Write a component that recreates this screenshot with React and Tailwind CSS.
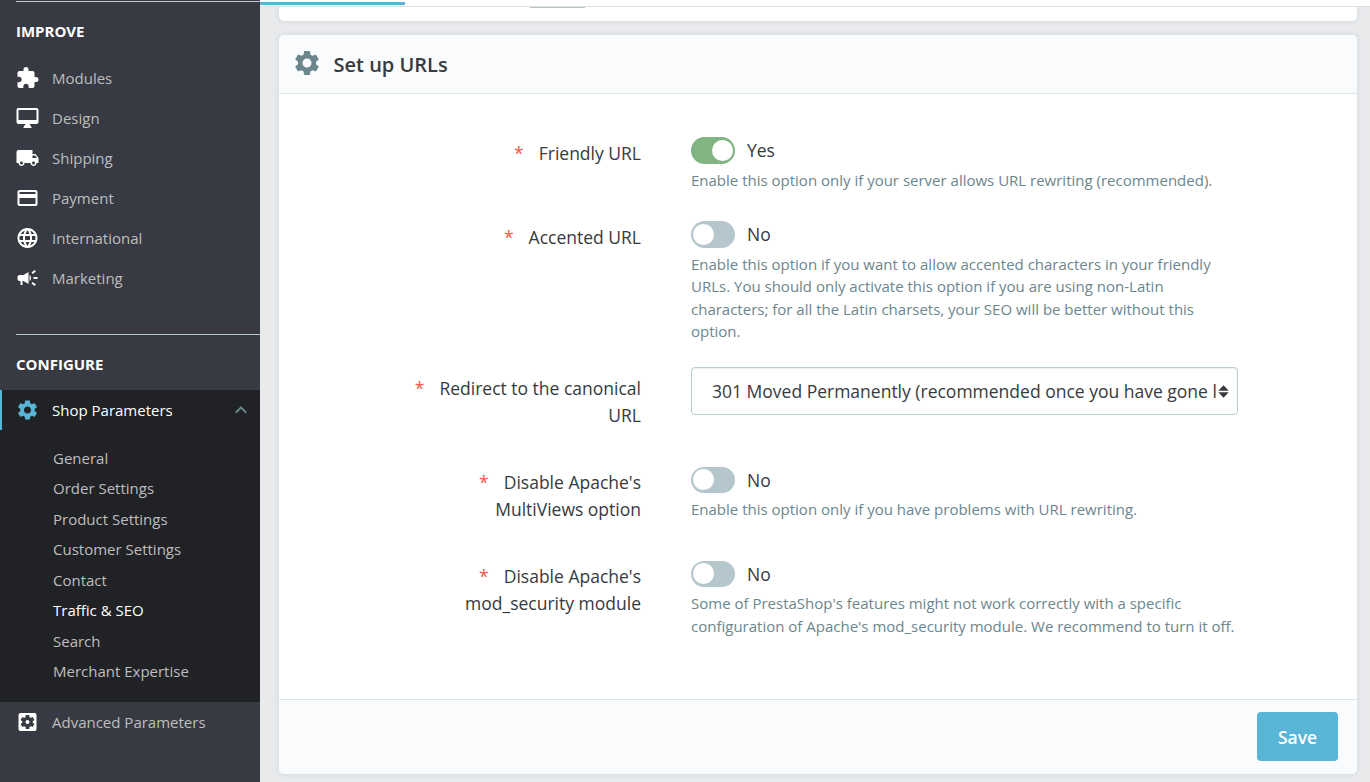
import React from "react";
import {
  MdExtension, MdLocalShipping, MdCreditCard, MdLanguage,
  MdCampaign, MdSettings, MdSettingsApplications, MdKeyboardArrowUp,
} from "react-icons/md";

function DesktopIcon({ className }) {
  return (
    <svg className={className} viewBox="0 0 24 24" fill="currentColor">
      <path d="M21 2H3c-1.1 0-2 .9-2 2v12c0 1.1.9 2 2 2h7l-2 3v1h8v-1l-2-3h7c1.1 0 2-.9 2-2V4c0-1.1-.9-2-2-2zm0 12H3V4h18v10z" />
    </svg>
  );
}

const improve = [
  ["Modules", MdExtension],
  ["Design", DesktopIcon],
  ["Shipping", MdLocalShipping],
  ["Payment", MdCreditCard],
  ["International", MdLanguage],
  ["Marketing", MdCampaign],
];

const shopLinks = [
  "General", "Order Settings", "Product Settings", "Customer Settings",
  "Contact", "Traffic & SEO", "Search", "Merchant Expertise",
];

function Sidebar() {
  return (
    <nav className="flex h-full w-[260px] shrink-0 flex-col bg-[#373a42] text-[15px] text-[#bebebe]">
      <div className="mt-px ml-4 h-px shrink-0 bg-[#bbcdd2]" />
      <h2 className="mt-[19px] ml-4 text-[15px] leading-5 font-bold text-white">IMPROVE</h2>
      <ul className="mt-[17px]">
        {improve.map(([name, Icon]) => (
          <li key={name} className="flex h-10 items-center pl-4">
            <Icon className="size-6 -translate-x-[0.5px] text-white" />
            <span className="ml-3">{name}</span>
          </li>
        ))}
      </ul>
      <div className="mt-9 ml-4 h-px shrink-0 bg-[#b3c7cd]" />
      <h2 className="mt-[19px] ml-4 text-[15px] leading-5 font-bold text-white">CONFIGURE</h2>
      <div className="mt-4 h-[312px] shrink-0 bg-[#212226]">
        <div className="flex h-10 items-center border-l-2 border-[#58b5d6] pl-3.5 text-white">
          <MdSettings className="size-6 -translate-x-[0.5px] text-[#58b5d6]" />
          <span className="ml-3">Shop Parameters</span>
          <MdKeyboardArrowUp className="mr-[7px] ml-auto size-6 text-[#6c868e]" />
        </div>
        <ul className="pt-[13px] pl-[53px]">
          {shopLinks.map((name) => (
            <li key={name} className={`h-[30.45px] leading-[30px] ${name === "Traffic & SEO" ? "text-white" : ""}`}>
              {name}
            </li>
          ))}
        </ul>
      </div>
      <div className="flex h-10 items-center pl-4">
        <MdSettingsApplications className="size-6 -translate-x-[0.5px] text-white" />
        <span className="ml-3">Advanced Parameters</span>
      </div>
    </nav>
  );
}

function Switch({ on, short }) {
  return (
    <div className="flex h-[27px] items-center gap-3 text-[17.5px]">
      <div className={`flex w-11 items-center rounded-full px-0.5 ${short ? "h-[26px]" : "h-[27px]"} ${on ? "justify-end bg-[#80b482]" : "justify-start bg-[#b5c6cd]"}`}>
        <div className="size-[21px] rounded-full bg-white" />
      </div>
      <span>{on ? "Yes" : "No"}</span>
    </div>
  );
}

function Row({ lines, help, height, children }) {
  return (
    <div className={`flex ${height}`}>
      <div className="mt-[3px] w-[362px] shrink-0 text-right text-[17.5px] leading-[27px]">
        {lines.map((line, i) => (
          <div key={line}>
            {i === 0 && <span className="mr-[15px] text-[#ee5a48]">*</span>}
            {line}
          </div>
        ))}
      </div>
      <div className="ml-[50px] w-[560px]">
        {children}
        {help && (
          <div className="mt-[5px] text-[15px] leading-[22.4px] text-[#6c868e]">
            {help.map((line) => (
              <div key={line} className="whitespace-nowrap">{line}</div>
            ))}
          </div>
        )}
      </div>
    </div>
  );
}

export default function App() {
  return (
    <div className="flex h-[782px] w-[1370px] overflow-hidden bg-[#e9eaec] font-['Open_Sans','Noto_Sans',sans-serif] text-[#363a41]">
      <Sidebar />
      <main className="flex min-w-0 flex-1 flex-col">
        <div className="h-[7px] shrink-0 border-b border-[#dddfe1] bg-white pt-0.5">
          <div className="h-[3px] w-[145px] bg-[#58b5d6]" />
        </div>
        <div className="mr-[13px] ml-[19px] h-3.5 shrink-0 rounded-b-[5px] bg-white pl-[251px] shadow-[0_0_4px_1px_rgba(172,195,200,0.35)] [clip-path:inset(0_-8px_-8px_-8px)]">
          <div className="h-px w-[55px] bg-[#b9c4c9]" />
        </div>
        <section className="mt-3.5 mr-[13px] ml-[19px] flex h-[739px] shrink-0 flex-col overflow-hidden rounded-[5px] bg-white shadow-[0_0_4px_1px_rgba(172,195,200,0.35)]">
          <header className="flex h-[59px] items-center border-b border-[#dce6e8] bg-[#fafbfc] pl-[13px]">
            <MdSettings className="mb-0.5 size-[30px] text-[#6c868e]" />
            <h1 className="mt-0.5 ml-[11.5px] text-[20px] font-semibold">Set up URLs</h1>
          </header>
          <div className="flex-1 pt-[43px]">
            <Row lines={["Friendly URL"]} height="h-[84px]" help={["Enable this option only if your server allows URL rewriting (recommended)."]}>
              <Switch on />
            </Row>
            <Row
              lines={["Accented URL"]}
              height="h-[151px]"
              help={[
                "Enable this option if you want to allow accented characters in your friendly",
                "URLs. You should only activate this option if you are using non-Latin",
                "characters; for all the Latin charsets, your SEO will be better without this",
                "option.",
              ]}
            >
              <Switch />
            </Row>
            <Row lines={["Redirect to the canonical", "URL"]} height="h-[94.4px]">
              <div className="-mt-[5px] flex h-12 w-[547px] items-center rounded-[4px] border border-[#bbcdd2] pl-5 text-[17.5px] shadow-[inset_0_1px_2px_rgba(0,0,0,0.07)]">
                <span className="w-[506px] overflow-hidden whitespace-nowrap">301 Moved Permanently (recommended once you have gone live)</span>
                <svg className="h-[13px] w-[11px]" viewBox="0 0 11 13" fill="#363a41">
                  <path d="M0.3 5.7 5.5 0.2l5.2 5.5zM0.3 7.3h10.4l-5.2 5.5z" />
                </svg>
              </div>
            </Row>
            <Row lines={["Disable Apache's", "MultiViews option"]} height="h-[94px]" help={["Enable this option only if you have problems with URL rewriting."]}>
              <Switch short />
            </Row>
            <Row
              lines={["Disable Apache's", "mod_security module"]}
              height="h-[94px]"
              help={[
                "Some of PrestaShop's features might not work correctly with a specific",
                "configuration of Apache's mod_security module. We recommend to turn it off.",
              ]}
            >
              <Switch short />
            </Row>
          </div>
          <footer className="flex h-[75px] justify-end border-t border-[#dce6e8] bg-[#fafbfc] pt-3 pr-[19px]">
            <button className="h-[49px] w-[81px] rounded-[4px] bg-[#58b5d6] pt-0.5 text-[17.5px] font-semibold text-white">Save</button>
          </footer>
        </section>
      </main>
    </div>
  );
}
